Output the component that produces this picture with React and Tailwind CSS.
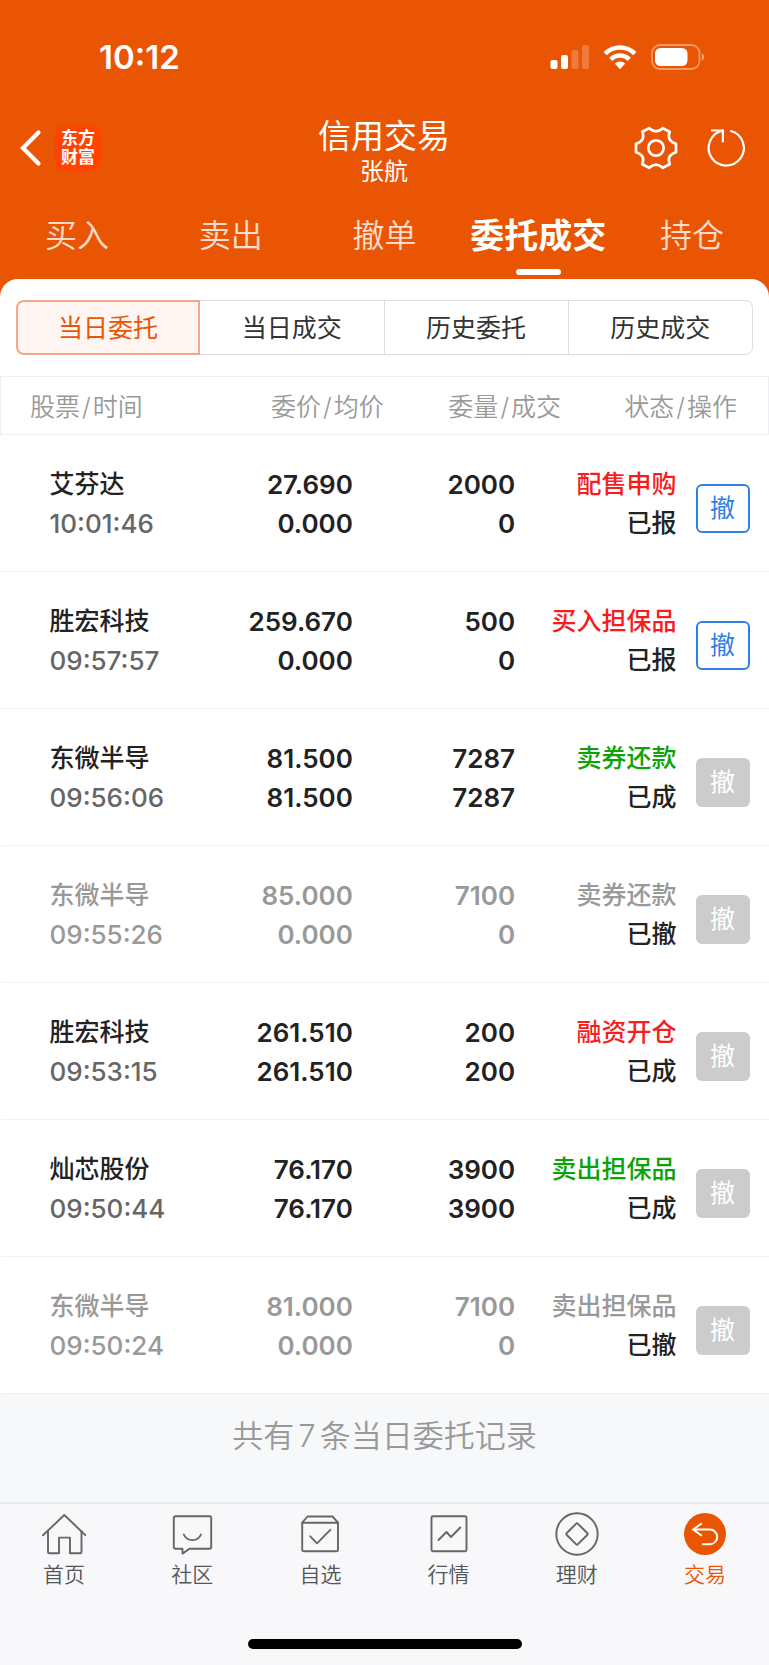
const SANS = "font-['Inter','Noto_Sans_CJK_SC',sans-serif]";

const tabs = ["买入", "卖出", "撤单", "委托成交", "持仓"];
const segments = ["当日委托", "当日成交", "历史委托", "历史成交"];

const orders = [
  { name: "艾芬达", time: "10:01:46", price: "27.690", avg: "0.000", qty: "2000", filled: "0", side: "配售申购", tone: "buy", state: "已报", open: true },
  { name: "胜宏科技", time: "09:57:57", price: "259.670", avg: "0.000", qty: "500", filled: "0", side: "买入担保品", tone: "buy", state: "已报", open: true },
  { name: "东微半导", time: "09:56:06", price: "81.500", avg: "81.500", qty: "7287", filled: "7287", side: "卖券还款", tone: "sell", state: "已成" },
  { name: "东微半导", time: "09:55:26", price: "85.000", avg: "0.000", qty: "7100", filled: "0", side: "卖券还款", tone: "void", state: "已撤" },
  { name: "胜宏科技", time: "09:53:15", price: "261.510", avg: "261.510", qty: "200", filled: "200", side: "融资开仓", tone: "buy", state: "已成" },
  { name: "灿芯股份", time: "09:50:44", price: "76.170", avg: "76.170", qty: "3900", filled: "3900", side: "卖出担保品", tone: "sell", state: "已成" },
  { name: "东微半导", time: "09:50:24", price: "81.000", avg: "0.000", qty: "7100", filled: "0", side: "卖出担保品", tone: "void", state: "已撤" },
];

const sideColor = { buy: "text-[#f91c1c]", sell: "text-[#0aa40a]", void: "text-[#999999]" };

function StatusBar() {
  return (
    <div className="flex h-[108px] items-center justify-between pl-[99px] pr-[64px] pt-[6px]">
      <span className="text-[33px] font-semibold leading-none">10:12</span>
      <div className="flex items-center gap-[14px]">
        <svg width="39" height="26" viewBox="0 0 39 26" fill="#fff" aria-hidden="true">
          <rect x="0.5" y="16" width="7" height="9" rx="2" />
          <rect x="11" y="11" width="7" height="14" rx="2" />
          <rect x="21.500" y="6" width="7" height="19" rx="2" opacity="0.22" />
          <rect x="32" y="1" width="7" height="24" rx="2" opacity="0.22" />
        </svg>
        <svg width="34" height="26" viewBox="0 0 34 26" fill="none" stroke="#fff" strokeWidth="4.600" aria-hidden="true">
          <path d="M2.200 9.600A21 21 0 0 1 31.800 9.600" />
          <path d="M7.700 15.300A13.200 13.200 0 0 1 26.300 15.300" />
          <path d="M17 25.200L11.700 19.600A7.600 7.600 0 0 1 22.300 19.600Z" fill="#fff" stroke="none" />
        </svg>
        <svg width="54" height="26" viewBox="0 0 54 26" aria-hidden="true">
          <rect x="1" y="1" width="47.500" height="24" rx="8" fill="none" stroke="#fff" strokeOpacity="0.4" strokeWidth="1.800" />
          <rect x="4" y="4" width="32.500" height="18" rx="5.500" fill="#fff" />
          <path d="M50.800 9.300C53.800 10.600 53.800 15.400 50.800 16.700Z" fill="#fff" opacity="0.45" />
        </svg>
      </div>
    </div>
  );
}

function TitleBar() {
  return (
    <div className="grid h-[80px] grid-cols-[1fr_auto_1fr] items-center pl-[19px] pr-[20px]">
      <div className="flex items-center gap-[13px]">
        <button type="button" aria-label="返回" className="flex">
          <svg width="23" height="38" viewBox="0 0 23 38" fill="none" stroke="#fff" strokeWidth="4.200" strokeLinecap="round" aria-hidden="true">
            <path d="M19.500 3.500L4 19L19.500 34.500" />
          </svg>
        </button>
        <a href="#home" className="flex h-[46px] w-[46px] flex-col items-center justify-center rounded-[9px] bg-[#ff4300] text-[17px] font-bold leading-[19px]">
          <span>东方</span>
          <span>财富</span>
        </a>
      </div>
      <div className="pt-2 text-center">
        <h1 className="text-[33px] leading-[40px]">信用交易</h1>
        <p className="text-[24px] leading-[32px]">张航</p>
      </div>
      <div className="flex items-center justify-end gap-[26px]">
        <button type="button" aria-label="设置" className="flex">
          <svg width="46" height="46" viewBox="0 0 46 46" fill="none" stroke="#fff" strokeWidth="2.700" strokeLinejoin="round" aria-hidden="true">
            <path d="M16.200 3.200Q23 9.500 29.800 3.200L36.700 6.800Q33.300 15.800 43 18.700V27.300Q33.300 30.200 36.700 39.200L29.800 42.800Q23 36.500 16.200 42.800L9.300 39.200Q12.700 30.200 3 27.300V18.700Q12.700 15.800 9.300 6.800Z" />
            <circle cx="23" cy="23" r="7.700" />
          </svg>
        </button>
        <button type="button" aria-label="刷新" className="flex">
          <svg width="44" height="44" viewBox="0 0 44 44" fill="none" stroke="#fff" strokeWidth="2.200" aria-hidden="true">
            <path d="M26 5A17.600 17.600 0 1 1 17.700 4.700" strokeLinecap="round" />
            <path d="M6 4.500H17.900V16.300" />
          </svg>
        </button>
      </div>
    </div>
  );
}

function Tabs() {
  return (
    <nav className="grid h-[91px] grid-cols-5 pt-[24px]">
      {tabs.map((tab) => {
        const active = tab === "委托成交";
        return (
          <button
            type="button"
            key={tab}
            aria-current={active ? "page" : undefined}
            className={`flex flex-col items-center whitespace-nowrap leading-[48px] ${active ? "text-[34px] font-bold" : "text-[32px] font-[350] text-white/80"}`}
          >
            {tab}
            {active && <span className="mt-[9px] h-[6px] w-[45px] rounded-full bg-white" />}
          </button>
        );
      })}
    </nav>
  );
}

function Segments() {
  return (
    <div className="mx-4 grid h-[55px] grid-cols-4">
      {segments.map((label, i) => (
        <button
          type="button"
          key={label}
          aria-pressed={i === 0}
          className={`border pt-[2px] text-[25px] first:rounded-l-lg last:rounded-r-lg ${
            i === 0 ? "border-2 border-[#f3a989] bg-[#fff6f3] text-[#ea5504]" : "border-l-0 border-[#dcdee6] text-[#333333]"
          }`}
        >
          {label}
        </button>
      ))}
    </div>
  );
}

function OrderRow({ order }) {
  const isVoid = order.tone === "void";
  const main = isVoid ? "text-[#999999]" : "text-[#222222]";
  return (
    <tr className={`h-[137px] border-b border-[#f2f2f4] align-top text-[25px] font-medium leading-[39px] ${main}`}>
      <td className="pl-[49px] pt-[30px]">
        <div>{order.name}</div>
        <div className={`text-[26px] ${isVoid ? "" : "text-[#666666]"}`}>{order.time}</div>
      </td>
      <td className="pr-[47px] pt-[30px] text-right text-[26px] font-semibold">
        <div>{order.price}</div>
        <div>{order.avg}</div>
      </td>
      <td className="pr-[46px] pt-[30px] text-right text-[26px] font-semibold">
        <div>{order.qty}</div>
        <div>{order.filled}</div>
      </td>
      <td className="pr-[19px] pt-[30px]">
        <div className="flex items-start gap-[19px]">
          <div className="flex min-w-0 flex-1 flex-col items-end whitespace-nowrap">
            <span className={sideColor[order.tone]}>{order.side}</span>
            <span className="text-[#222222]">{order.state}</span>
          </div>
          <button
            type="button"
            disabled={!order.open}
            className={`mt-[19px] h-[49px] w-[54px] shrink-0 rounded-md text-[25px] font-normal leading-none ${
              order.open ? "border-2 border-[#2f7fe6] bg-white text-[#2f7fe6]" : "bg-[#cccccc] text-white"
            }`}
          >
            撤
          </button>
        </div>
      </td>
    </tr>
  );
}

function PairLabel({ first, second }) {
  return (
    <>
      {first}
      <span className="mx-[2px]">/</span>
      {second}
    </>
  );
}

function OrderTable() {
  return (
    <table className="mt-[21px] w-full table-fixed border-collapse">
      <colgroup>
        <col className="w-[31%]" />
        <col className="w-[21%]" />
        <col className="w-[21%]" />
        <col className="w-[27%]" />
      </colgroup>
      <thead>
        <tr className="h-[58px] border border-[#efeff2] text-right text-[25px] leading-[39px] text-[#999999]">
          <th scope="col" className="pl-[29px] pt-[3px] text-left font-[350]"><PairLabel first="股票" second="时间" /></th>
          <th scope="col" className="whitespace-nowrap pr-[16px] pt-[3px] font-[350]"><PairLabel first="委价" second="均价" /></th>
          <th scope="col" className="whitespace-nowrap pt-[3px] font-[350]"><PairLabel first="委量" second="成交" /></th>
          <th scope="col" className="whitespace-nowrap pr-[31px] pt-[3px] font-[350]"><PairLabel first="状态" second="操作" /></th>
        </tr>
      </thead>
      <tbody>
        {orders.map((order) => (
          <OrderRow key={order.time} order={order} />
        ))}
      </tbody>
    </table>
  );
}

const line = { fill: "none", stroke: "#666666", strokeWidth: 1.9, strokeLinejoin: "round", strokeLinecap: "round" };

const navItems = [
  {
    label: "首页",
    icon: (
      <g {...line}>
        <path d="M1 23.300L22.300 3L43.500 23.300" />
        <path d="M6 19V40Q6 41.300 7.300 41.300H17V25.600H28V41.300H38.200Q39.500 41.300 39.500 40V19" />
      </g>
    ),
  },
  {
    label: "社区",
    icon: (
      <g {...line}>
        <path d="M5.500 4.200H39.500Q41.200 4.200 41.200 5.900V35Q41.200 36.700 39.500 36.700H19.500L12.500 41.600V36.700H5.500Q3.800 36.700 3.800 35V5.900Q3.800 4.200 5.500 4.200Z" />
        <path d="M13.800 22.500C17 30 27.800 30 31 22.500" />
      </g>
    ),
  },
  {
    label: "自选",
    icon: (
      <g {...line}>
        <path d="M4.200 10.700L9.500 4.500H34.500L40 10.700V37.500Q40 39.300 38.200 39.300H6Q4.200 39.300 4.200 37.500Z" />
        <path d="M4.200 10.700H40" />
        <path d="M12.300 24.300L19 31.300L32.300 17.800" />
      </g>
    ),
  },
  {
    label: "行情",
    icon: (
      <g {...line}>
        <rect x="4.500" y="4.300" width="35" height="35" rx="1.500" />
        <path d="M11.500 28L19.500 20L24 25L33.300 15.500" />
      </g>
    ),
  },
  {
    label: "理财",
    icon: (
      <g {...line}>
        <circle cx="22" cy="22" r="20.700" />
        <path d="M21 11.800Q22 10.800 23 11.800L32.200 21Q33.200 22 32.200 23L23 32.200Q22 33.200 21 32.200L11.800 23Q10.800 22 11.800 21Z" />
      </g>
    ),
  },
  {
    label: "交易",
    active: true,
    icon: (
      <g fill="none" stroke="#fff" strokeWidth="2">
        <circle cx="22" cy="22" r="21" fill="#ea5504" stroke="none" />
        <path d="M18.800 11.300L10.200 17.500L18.800 23.700" />
        <path d="M10.200 17.500H26.800A7.400 7.400 0 0 1 26.800 32.300H19" />
      </g>
    ),
  },
];

function BottomNav() {
  return (
    <nav className="grid h-[135px] grid-cols-6 border-t-2 border-[#ebecef] bg-[#f8f8fb] pt-[8px]">
      {navItems.map(({ label, icon, active }) => (
        <a key={label} href={`#${label}`} className={`flex flex-col items-center text-[21px] font-[350] leading-[30px] ${active ? "text-[#ea5504]" : "text-[#555555]"}`}>
          <svg width="44" height="44" viewBox="0 0 44 44" className="mb-[4px]" aria-hidden="true">
            {icon}
          </svg>
          {label}
        </a>
      ))}
    </nav>
  );
}

export default function App() {
  return (
    <div className={`flex min-h-screen flex-col bg-[#f7f8fa] ${SANS}`}>
      <header className="bg-[#ea5504] text-white">
        <StatusBar />
        <TitleBar />
        <Tabs />
      </header>
      <main className="flex grow flex-col bg-[#ea5504]">
        <section className="rounded-t-[18px] bg-white pt-[21px]">
          <Segments />
          <OrderTable />
        </section>
        <p className="grow bg-[#f7f8fa] pt-[21px] text-center text-[31px] font-[350] leading-[42px] text-[#999999]">
          共有<span className="mx-[4px]">7</span>条当日委托记录
        </p>
      </main>
      <footer className="bg-[#f8f8fb]">
        <BottomNav />
        <div className="flex h-[28px] justify-center pt-[2px]">
          <div className="h-[10px] w-[274px] rounded-full bg-black" />
        </div>
      </footer>
    </div>
  );
}
